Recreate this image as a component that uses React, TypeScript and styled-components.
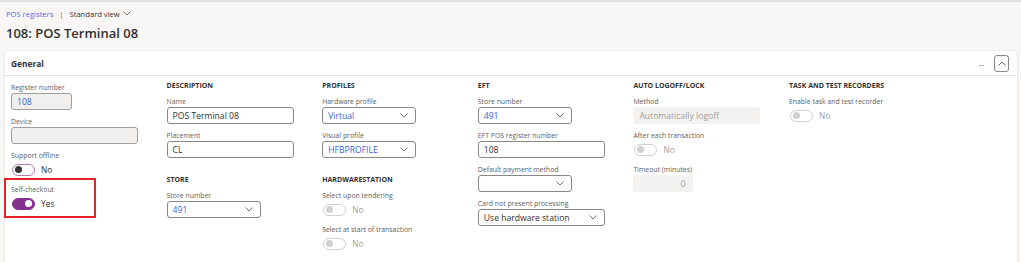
import styled, { createGlobalStyle } from "styled-components";

const GlobalStyle = createGlobalStyle`
  body {
    margin: 0;
    background: #f8f7f6;
    font-family: "Open Sans", "Noto Sans", sans-serif;
    color: #323130;
  }
`;

const Page = styled.div`
  height: 262px;
  border-top: 2px solid #e3e1df;
  box-sizing: border-box;
  overflow: hidden;
`;

const Breadcrumb = styled.div`
  display: flex;
  align-items: center;
  gap: 6px;
  height: 21px;
  padding: 2px 0 0 6px;
  box-sizing: border-box;
  font-size: 7.6px;
  color: #605e5c;
`;

const Crumb = styled.span`
  color: #4f6bed;
`;

const ViewPicker = styled.span`
  display: flex;
  align-items: center;
  gap: 3px;
  color: #323130;
`;

const Title = styled.h1`
  margin: 0;
  padding-left: 6px;
  height: 28px;
  line-height: 20px;
  font-size: 13px;
  font-weight: 600;
`;

const Card = styled.section`
  margin: 0 4px 0 5px;
  background: #fff;
  border-radius: 4px;
  box-shadow: 0 0 2px rgba(0, 0, 0, 0.12), 0 1px 2px rgba(0, 0, 0, 0.1);
  height: 220px;
`;

const CardHeader = styled.div`
  display: flex;
  align-items: center;
  height: 24px;
  padding: 0 8px 0 6px;
  border-bottom: 1px solid #e1dfdd;
`;

const CardTitle = styled.h2`
  margin: 0;
  flex: 1;
  font-size: 8.4px;
  font-weight: 700;
`;

const Dashes = styled.span`
  font-size: 8px;
  color: #605e5c;
  margin-right: 10px;
`;

const CollapseButton = styled.button`
  width: 15px;
  height: 17px;
  padding: 0;
  border: 1px solid #8a8886;
  border-radius: 3px;
  background: #fff;
  display: flex;
  align-items: center;
  justify-content: center;
`;

const Body = styled.div`
  display: grid;
  grid-template-columns: repeat(5, 155.6px) 1fr;
  padding: 4px 0 0 6px;
`;

const Column = styled.div<{ $offset?: number }>`
  display: flex;
  flex-direction: column;
  padding-top: ${(p) => p.$offset ?? 0}px;
`;

const GroupTitle = styled.h3<{ $first?: boolean }>`
  margin: ${(p) => (p.$first ? 0 : "10px")} 0 4px;
  height: 12px;
  line-height: 12px;
  font-size: 7px;
  font-weight: 700;
  text-transform: uppercase;
`;

const FieldBox = styled.div`
  display: flex;
  flex-direction: column;
  margin-bottom: 6px;
`;

const Label = styled.label`
  height: 11px;
  line-height: 11px;
  font-size: 6.9px;
  color: #605e5c;
`;

const Input = styled.div<{ $w: number; $tone?: "edit" | "readonly" | "disabled"; $blue?: boolean; $right?: boolean }>`
  box-sizing: border-box;
  width: ${(p) => p.$w}px;
  height: 17px;
  display: flex;
  align-items: center;
  justify-content: ${(p) => (p.$right ? "flex-end" : "space-between")};
  padding: 0 7px 0 5px;
  border-radius: 3px;
  font-size: 8.6px;
  border: 1px solid
    ${(p) => (p.$tone === "disabled" ? "#f3f2f1" : p.$tone === "readonly" ? "#a19f9d" : "#8a8886")};
  background: ${(p) => (p.$tone === "disabled" ? "#f3f2f1" : p.$tone === "readonly" ? "#f0efee" : "#fff")};
  color: ${(p) => (p.$tone === "disabled" ? "#a19f9d" : p.$blue ? "#3b5fe0" : "#323130")};
`;

const ToggleRow = styled.div`
  height: 17px;
  display: flex;
  align-items: center;
  gap: 6px;
  padding-left: 1px;
`;

const Track = styled.span<{ $state: "on" | "off" | "disabled" }>`
  box-sizing: border-box;
  width: 23px;
  height: 12px;
  border-radius: 6px;
  display: flex;
  align-items: center;
  padding: 0 2px;
  justify-content: ${(p) => (p.$state === "on" ? "flex-end" : "flex-start")};
  background: ${(p) => (p.$state === "on" ? "#84308c" : "#fff")};
  border: 1px solid
    ${(p) => (p.$state === "on" ? "#84308c" : p.$state === "off" ? "#b07ab4" : "#d2d0ce")};
`;

const Knob = styled.span<{ $state: "on" | "off" | "disabled" }>`
  width: 7px;
  height: 7px;
  border-radius: 50%;
  background: ${(p) => (p.$state === "on" ? "#fff" : p.$state === "off" ? "#323130" : "#d2d0ce")};
`;

const ToggleText = styled.span<{ $muted?: boolean }>`
  font-size: 8.4px;
  color: ${(p) => (p.$muted ? "#a19f9d" : "#323130")};
`;

const Highlight = styled.div`
  position: relative;

  &::after {
    content: "";
    position: absolute;
    left: -7px;
    top: -6px;
    width: 88px;
    height: 36px;
    border: 2px solid #e8202a;
  }
`;

const Chevron = ({ up }: { up?: boolean }) => (
  <svg width="8" height="5" viewBox="0 0 8 5" fill="none">
    <path
      d={up ? "M0.5 4.5L4 1L7.5 4.5" : "M0.5 0.5L4 4L7.5 0.5"}
      stroke="#605e5c"
      strokeWidth="0.9"
    />
  </svg>
);

type Tone = "edit" | "readonly" | "disabled";

function TextField(props: {
  label: string;
  value?: string;
  w: number;
  tone?: Tone;
  blue?: boolean;
  right?: boolean;
  select?: boolean;
}) {
  return (
    <FieldBox>
      <Label>{props.label}</Label>
      <Input $w={props.w} $tone={props.tone} $blue={props.blue} $right={props.right}>
        <span>{props.value}</span>
        {props.select && <Chevron />}
      </Input>
    </FieldBox>
  );
}

function Toggle({ label, state }: { label: string; state: "on" | "off" | "disabled" }) {
  return (
    <FieldBox>
      <Label>{label}</Label>
      <ToggleRow>
        <Track $state={state}>
          <Knob $state={state} />
        </Track>
        <ToggleText $muted={state === "disabled"}>{state === "on" ? "Yes" : "No"}</ToggleText>
      </ToggleRow>
    </FieldBox>
  );
}

export default function App() {
  return (
    <Page>
      <GlobalStyle />
      <Breadcrumb>
        <Crumb>POS registers</Crumb>
        <span>|</span>
        <ViewPicker>
          Standard view <Chevron />
        </ViewPicker>
      </Breadcrumb>
      <Title>108: POS Terminal 08</Title>
      <Card>
        <CardHeader>
          <CardTitle>General</CardTitle>
          <Dashes>--</Dashes>
          <CollapseButton>
            <Chevron up />
          </CollapseButton>
        </CardHeader>
        <Body>
          <Column $offset={2}>
            <TextField label="Register number" value="108" w={61} tone="readonly" blue />
            <TextField label="Device" w={127} tone="readonly" />
            <Toggle label="Support offline" state="off" />
            <Highlight>
              <Toggle label="Self-checkout" state="on" />
            </Highlight>
          </Column>
          <Column>
            <GroupTitle $first>Description</GroupTitle>
            <TextField label="Name" value="POS Terminal 08" w={127} />
            <TextField label="Placement" value="CL" w={127} />
            <GroupTitle>Store</GroupTitle>
            <TextField label="Store number" value="491" w={94} blue select />
          </Column>
          <Column>
            <GroupTitle $first>Profiles</GroupTitle>
            <TextField label="Hardware profile" value="Virtual" w={94} blue select />
            <TextField label="Visual profile" value="HFBPROFILE" w={94} blue select />
            <GroupTitle>Hardwarestation</GroupTitle>
            <Toggle label="Select upon tendering" state="disabled" />
            <Toggle label="Select at start of transaction" state="disabled" />
          </Column>
          <Column>
            <GroupTitle $first>EFT</GroupTitle>
            <TextField label="Store number" value="491" w={94} blue select />
            <TextField label="EFT POS register number" value="108" w={127} />
            <TextField label="Default payment method" w={94} select />
            <TextField label="Card not present processing" value="Use hardware station" w={127} select />
          </Column>
          <Column>
            <GroupTitle $first>Auto logoff/lock</GroupTitle>
            <TextField label="Method" value="Automatically logoff" w={127} tone="disabled" />
            <Toggle label="After each transaction" state="disabled" />
            <TextField label="Timeout (minutes)" value="0" w={60} tone="disabled" right />
          </Column>
          <Column>
            <GroupTitle $first>Task and test recorders</GroupTitle>
            <Toggle label="Enable task and test recorder" state="disabled" />
          </Column>
        </Body>
      </Card>
    </Page>
  );
}
